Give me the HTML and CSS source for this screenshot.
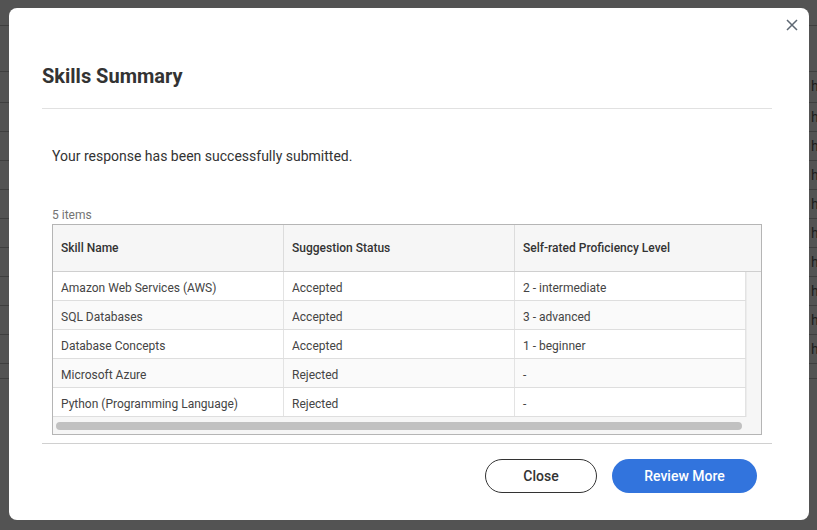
FILE: index.html
```html
<!DOCTYPE html>
<html>
<head>
<meta charset="utf-8">
<link rel="stylesheet" href="styles.css">
</head>
<body>
<div class="page">
  <div class="bg-row bg-head"><span></span><span></span></div>
  <div class="bg-row bg-first"><span></span><span>h</span></div>
  <div class="bg-row"><span></span><span>h</span></div>
  <div class="bg-row"><span></span><span>h</span></div>
  <div class="bg-row"><span></span><span>h</span></div>
  <div class="bg-row"><span></span><span>h</span></div>
  <div class="bg-row"><span></span><span>h</span></div>
  <div class="bg-row"><span></span><span>h</span></div>
  <div class="bg-row"><span></span><span>h</span></div>
  <div class="bg-row"><span></span><span>h</span></div>
  <div class="bg-row"><span></span><span>h</span></div>
  <div class="bg-row bg-last"><span></span><span></span></div>
</div>

<div class="modal">
  <button class="close-x" aria-label="Close">
    <svg width="12" height="12" viewBox="0 0 12 12"><path d="M1 1 L11 11 M11 1 L1 11" stroke="#5e6873" stroke-width="1.5" fill="none"/></svg>
  </button>
  <div class="modal-header">
    <h2 class="title">Skills Summary</h2>
  </div>
  <p class="message">Your response has been successfully submitted.</p>
  <div class="count">5 items</div>
  <div class="grid">
    <div class="grid-head">
      <div class="hcell">Skill Name</div>
      <div class="hcell">Suggestion Status</div>
      <div class="hcell last">Self-rated Proficiency Level</div>
    </div>
    <div class="grid-body">
      <div class="rows">
        <div class="row"><div class="cell">Amazon Web Services (AWS)</div><div class="cell">Accepted</div><div class="cell">2 - intermediate</div></div>
        <div class="row alt"><div class="cell">SQL Databases</div><div class="cell">Accepted</div><div class="cell">3 - advanced</div></div>
        <div class="row"><div class="cell">Database Concepts</div><div class="cell">Accepted</div><div class="cell">1 - beginner</div></div>
        <div class="row alt"><div class="cell">Microsoft Azure</div><div class="cell">Rejected</div><div class="cell">-</div></div>
        <div class="row"><div class="cell">Python (Programming Language)</div><div class="cell">Rejected</div><div class="cell">-</div></div>
      </div>
      <div class="vtrack"></div>
    </div>
    <div class="htrack"><div class="hthumb"></div></div>
  </div>
  <div class="footer">
    <button class="btn btn-outline">Close</button>
    <button class="btn btn-primary">Review More</button>
  </div>
</div>
</body>
</html>
```
FILE: styles.css
```css
html, body {
  margin: 0;
  padding: 0;
}
body {
  width: 817px;
  height: 530px;
  background: #535353;
  font-family: Roboto, "Liberation Sans", Arial, sans-serif;
  overflow: hidden;
  position: relative;
}
.page {
  display: flex;
  flex-direction: column;
  padding-top: 25px;
}
.bg-row {
  display: grid;
  grid-template-columns: 811px 1fr;
  height: 28px;
  border-top: 1px solid #3f3f3f;
  font-size: 14px;
  line-height: 28px;
  color: #1c1c1c;
}
.bg-head { height: 45px; }
.bg-first { height: 30px; }
.bg-last { height: 14px; border-bottom: 1px solid #3f3f3f; }

.modal {
  position: absolute;
  left: 9px;
  top: 8px;
  width: 800px;
  height: 512px;
  background: #fff;
  border-radius: 8px;
  box-sizing: border-box;
  padding: 0 37px 0 33px;
  display: flex;
  flex-direction: column;
}
.close-x {
  position: absolute;
  right: 11px;
  top: 11px;
  width: 12px;
  height: 12px;
  padding: 0;
  border: 0;
  background: none;
  display: flex;
}
.modal-header {
  height: 100px;
  border-bottom: 1px solid #e1e1e1;
  box-sizing: content-box;
}
.title {
  margin: 0;
  padding-top: 56px;
  font-size: 20px;
  line-height: 25px;
  font-weight: 700;
  color: #333;
}
.message {
  margin: 37px 0 0 10px;
  font-size: 14px;
  line-height: 20px;
  color: #333;
}
.count {
  margin: 42px 0 0 10px;
  font-size: 12px;
  line-height: 15px;
  color: #737373;
}
.grid {
  margin: 1px 10px 0 10px;
  border: 1px solid #b5b5b5;
  display: flex;
  flex-direction: column;
}
.grid-head {
  display: grid;
  grid-template-columns: 231px 231px 1fr;
  height: 46px;
  background: #f6f6f6;
  border-bottom: 1px solid #cfcfcf;
}
.hcell {
  display: flex;
  align-items: center;
  padding-left: 8px;
  font-size: 12px;
  font-weight: 500;
  color: #333;
  border-right: 1px solid #dcdcdc;
}
.hcell.last { border-right: 0; }
.grid-body {
  display: flex;
}
.rows {
  width: 693px;
  display: flex;
  flex-direction: column;
}
.row {
  display: grid;
  grid-template-columns: 231px 231px 1fr;
  height: 28px;
  border-bottom: 1px solid #dedede;
  background: #fff;
}
.row.alt { background: #fafafa; }
.cell {
  display: flex;
  align-items: center;
  padding: 3px 0 0 8px;
  font-size: 12px;
  color: #444;
  border-right: 1px solid #e3e3e3;
}
.vtrack {
  flex: 1;
  background: #f6f6f6;
  border-left: 1px solid #ececec;
}
.htrack {
  height: 17px;
  background: #f6f6f6;
  display: flex;
  align-items: center;
  padding-left: 3px;
}
.hthumb {
  width: 686px;
  height: 8px;
  border-radius: 4px;
  background: #c1c1c1;
}
.footer {
  margin-top: 8px;
  border-top: 1px solid #d0d0d0;
  padding: 15px 15px 0 0;
  display: flex;
  justify-content: flex-end;
  gap: 15px;
}
.btn {
  height: 34px;
  border-radius: 17px;
  font-family: Roboto, "Liberation Sans", Arial, sans-serif;
  font-size: 14px;
  font-weight: 500;
  cursor: pointer;
}
.btn-outline {
  width: 112px;
  background: #fff;
  border: 1px solid #333;
  color: #333;
}
.btn-primary {
  width: 145px;
  background: #3274dd;
  border: 0;
  color: #fff;
}
```
